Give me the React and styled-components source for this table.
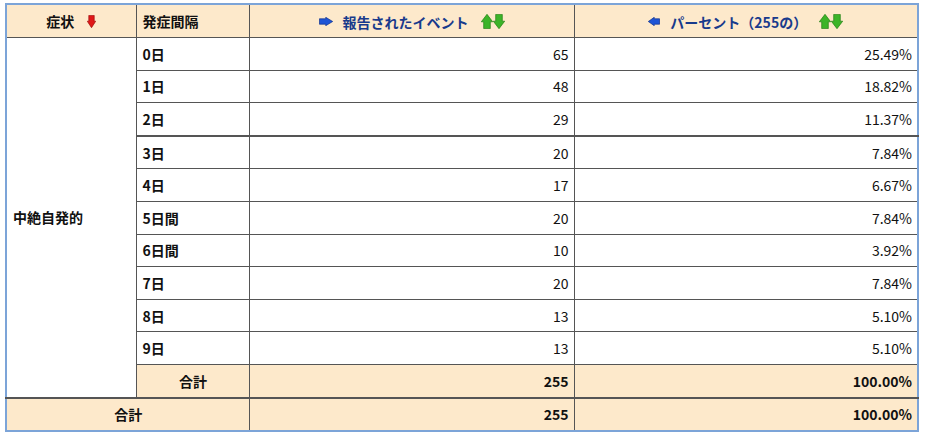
import React from "react";
import styled, { createGlobalStyle } from "styled-components";

const GlobalStyle = createGlobalStyle`
    html, body {
        margin: 0;
        padding: 0;
        background: #ffffff;
    }
    body {
        font-family: "Noto Sans CJK JP", "Noto Sans", sans-serif;
        color: #111111;
    }
`;

const rows = [
    { label: "0日", count: 65, pct: "25.49%" },
    { label: "1日", count: 48, pct: "18.82%" },
    { label: "2日", count: 29, pct: "11.37%", thick: true },
    { label: "3日", count: 20, pct: "7.84%" },
    { label: "4日", count: 17, pct: "6.67%" },
    { label: "5日間", count: 20, pct: "7.84%" },
    { label: "6日間", count: 10, pct: "3.92%" },
    { label: "7日", count: 20, pct: "7.84%" },
    { label: "8日", count: 13, pct: "5.10%" },
    { label: "9日", count: 13, pct: "5.10%" },
];

// block arrow: len along the pointing direction, wid across it
const Arrow = ({ dir = "right", color, dark, len = 13, wid = 9, shaft = 0.6 }) => {
    const s = (wid * (1 - shaft)) / 2;
    const neck = len * 0.48;
    // drawn pointing right in a len x wid box
    const d = `M0.4 ${s} H${neck} V0.3 L${len - 0.3} ${wid / 2} L${neck} ${wid - 0.3} V${wid - s} H0.4 Z`;
    const vertical = dir === "up" || dir === "down";
    const w = vertical ? wid : len;
    const h = vertical ? len : wid;
    const transform = {
        right: "",
        left: `translate(${len} 0) scale(-1 1)`,
        down: `translate(${wid} 0) rotate(90)`,
        up: `translate(0 ${len}) rotate(-90)`,
    }[dir];
    return (
        <ArrowSvg width={w} height={h} viewBox={`0 0 ${w} ${h}`}>
            <path
                d={d}
                transform={transform}
                fill={color}
                stroke={dark}
                strokeWidth="0.7"
                strokeLinejoin="round"
            />
        </ArrowSvg>
    );
};

const SortArrows = () => (
    <Sort>
        <Arrow dir="up" color="#3cb428" dark="#237f14" len={15} wid={12} shaft={0.55} />
        <Arrow dir="down" color="#3cb428" dark="#237f14" len={15} wid={12} shaft={0.55} />
    </Sort>
);

const App = () => {
    return (
        <>
            <GlobalStyle />
            <Page>
                <Table>
                    <colgroup>
                        <col style={{ width: 130 }} />
                        <col style={{ width: 113 }} />
                        <col style={{ width: 325 }} />
                        <col />
                    </colgroup>
                    <thead>
                        <tr>
                            <Head>
                                <HeadInner $gap={13}>
                                    症状
                                    <Arrow dir="down" color="#e01818" dark="#a00d0d" len={13} wid={9} />
                                </HeadInner>
                            </Head>
                            <Head $align="left">発症間隔</Head>
                            <Head $link>
                                <HeadInner>
                                    <Arrow dir="right" color="#1f55d6" dark="#10308c" len={14} wid={9} />
                                    報告されたイベント
                                    <SortArrows />
                                </HeadInner>
                            </Head>
                            <Head $link>
                                <HeadInner>
                                    <Arrow dir="left" color="#1f55d6" dark="#10308c" len={12} wid={9} />
                                    パーセント（255の）
                                    <SortArrows />
                                </HeadInner>
                            </Head>
                        </tr>
                    </thead>
                    <tbody>
                        {rows.map((r, i) => (
                            <Row key={r.label} $thick={r.thick}>
                                {i === 0 && <Group rowSpan={11}>中絶自発的</Group>}
                                <Label>{r.label}</Label>
                                <Num>{r.count}</Num>
                                <Num>{r.pct}</Num>
                            </Row>
                        ))}
                        <SubTotal>
                            <TotalCell $center>合計</TotalCell>
                            <TotalCell>255</TotalCell>
                            <TotalCell>100.00%</TotalCell>
                        </SubTotal>
                        <Row>
                            <TotalCell $center colSpan={2}>合計</TotalCell>
                            <TotalCell>255</TotalCell>
                            <TotalCell>100.00%</TotalCell>
                        </Row>
                    </tbody>
                </Table>
            </Page>
        </>
    );
};

const Page = styled.div`
    padding: 3px 8px 6px 5px;
`;

const Table = styled.table`
    width: 914px;
    border-collapse: collapse;
    table-layout: fixed;
    border: 2px solid #7ca4d8;
    font-size: 14px;
`;

const Head = styled.th`
    height: 32px;
    padding: 0 6px;
    background: #fde9cb;
    border: 1px solid #555555;
    font-weight: 700;
    text-align: ${(p) => (p.$align === "left" ? "left" : "center")};
    color: ${(p) => (p.$link ? "#183a8c" : "#111111")};
    white-space: nowrap;
`;

const HeadInner = styled.span`
    display: inline-flex;
    align-items: center;
    gap: ${(p) => p.$gap || 10}px;
`;

const ArrowSvg = styled.svg`
    display: block;
    flex: none;
`;

const Sort = styled.span`
    display: inline-flex;
    margin-left: 2px;
`;

const Row = styled.tr`
    & > td {
        height: 31.6px;
    }
    & > td:not([rowspan]) {
        border-bottom: ${(p) => (p.$thick ? "2px solid #555555" : "1px solid #555555")};
    }
`;

const SubTotal = styled.tr`
    & > td {
        height: 31.6px;
        border-bottom: 2px solid #555555;
    }
`;

const Cell = styled.td`
    border: 1px solid #555555;
    padding: 0 5px 0 6px;
    background: #ffffff;
    white-space: nowrap;
`;

const Group = styled(Cell)`
    font-weight: 700;
    vertical-align: middle;
    text-align: left;
    border-bottom: 2px solid #555555;
`;

const Label = styled(Cell)`
    font-weight: 700;
`;

const Num = styled(Cell)`
    text-align: right;
`;

const TotalCell = styled(Cell)`
    background: #fde9cb;
    font-weight: 700;
    text-align: ${(p) => (p.$center ? "center" : "right")};
`;

export default App;
